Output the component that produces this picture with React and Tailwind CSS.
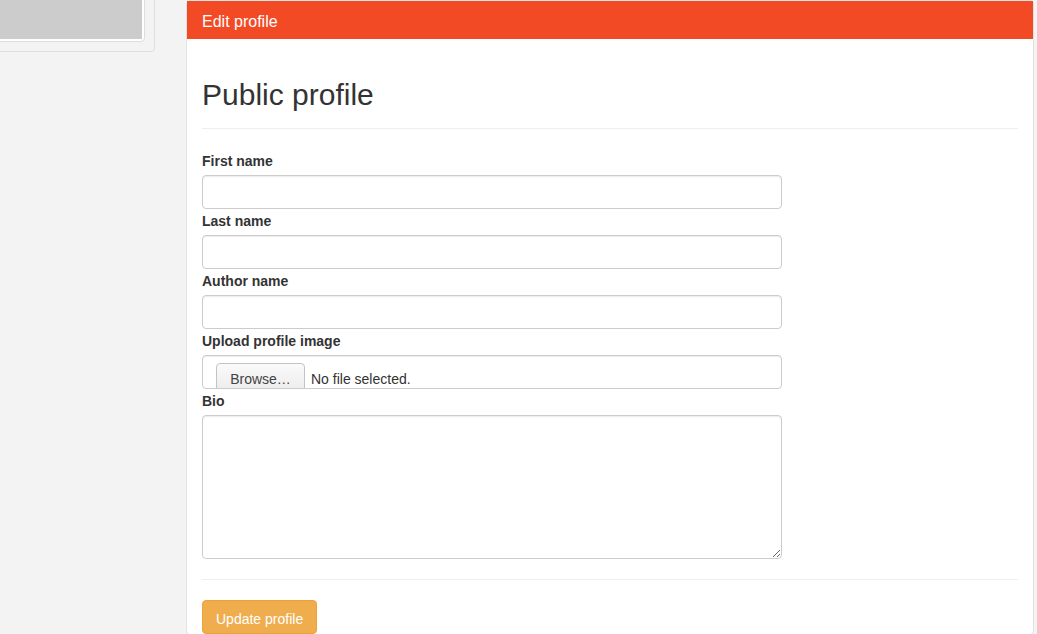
export default function App() {
    const fields = [
        { label: 'First name' },
        { label: 'Last name' },
        { label: 'Author name' },
    ];

    return (
        <div className="flex h-[634px] overflow-hidden bg-[#f3f3f3] text-[14px] text-[#333] font-['Liberation_Sans',Arial,sans-serif]">
            {/* Left column */}
            <div className="w-[186px] shrink-0">
                <div className="-ml-[20px] -mt-[100px] w-[175px] rounded-[4px] border border-[#dedede] bg-[#f3f3f3] p-[9px]">
                    <div className="rounded-[4px] border border-[#dddddd] bg-white p-[2px]">
                        <div className="h-[126px] bg-[#cccccc]" />
                    </div>
                </div>
            </div>

            {/* Main panel */}
            <div className="w-[848px] shrink-0 self-start rounded-[4px] border border-[#e2e2e2] bg-white">
                <div className="flex h-[38px] items-center bg-[#f24a25] px-[15px] pt-[4px] text-[16px] text-white">
                    Edit profile
                </div>
                <div className="px-[15px] pt-[39px]">
                    <div className="border-b border-[#eeeeee] pb-[17px]">
                        <h2 className="text-[30px] leading-[33px] font-normal text-[#333]">Public profile</h2>
                    </div>

                    <form className="pt-[22px]" onSubmit={(e) => e.preventDefault()}>
                        {fields.map((f) => (
                            <div key={f.label} className="mb-[2px] w-[580px]">
                                <label className="mb-[4px] block font-bold leading-[20px]">{f.label}</label>
                                <input
                                    type="text"
                                    className="block h-[34px] w-full rounded-[4px] border border-[#cccccc] bg-white px-[12px] shadow-[inset_0_1px_1px_rgba(0,0,0,0.075)] outline-none"
                                />
                            </div>
                        ))}

                        {/* Upload */}
                        <div className="mb-[2px] w-[580px]">
                            <label className="mb-[4px] block font-bold leading-[20px]">Upload profile image</label>
                            <div className="flex h-[34px] items-start overflow-hidden rounded-[4px] border border-[#cccccc] bg-white pl-[13px] pt-[7px] shadow-[inset_0_1px_1px_rgba(0,0,0,0.075)]">
                                <div className="flex h-[30px] w-[89px] shrink-0 items-center justify-center rounded-[4px] border border-[#c3c3c3] bg-gradient-to-b from-[#fafafa] to-[#ececec] pt-[2px] text-[#444]">
                                    Browse…
                                </div>
                                <span className="ml-[6px] pt-[8px] leading-[16px] text-[#333]">No file selected.</span>
                            </div>
                        </div>

                        {/* Bio */}
                        <div className="w-[580px]">
                            <label className="mb-[4px] block font-bold leading-[20px]">Bio</label>
                            <textarea className="block h-[144px] w-full resize-y rounded-[4px] border border-[#cccccc] bg-white px-[12px] py-[6px] shadow-[inset_0_1px_1px_rgba(0,0,0,0.075)] outline-none" />
                        </div>

                        <div className="mt-[20px] border-t border-[#eeeeee]" />

                        <button
                            type="submit"
                            className="mt-[20px] h-[34px] rounded-[4px] border border-[#eea236] bg-[#f0ad4e] px-[13px] pt-[4px] text-[14px] text-white"
                        >
                            Update profile
                        </button>
                    </form>
                </div>
            </div>
        </div>
    );
}
